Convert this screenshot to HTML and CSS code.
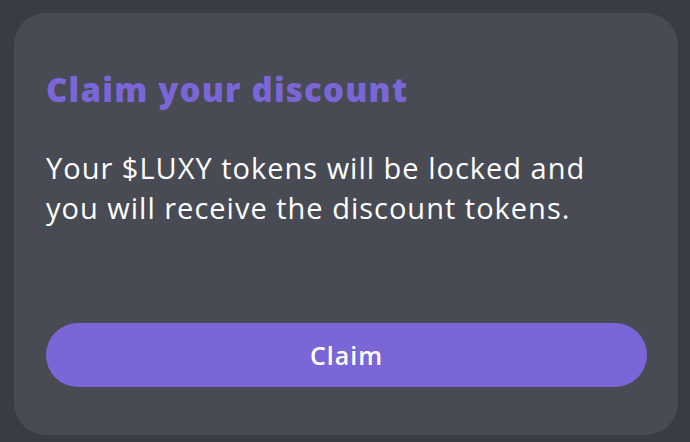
FILE: index.html
```html
<!DOCTYPE html>
<html>
<head>
<meta charset="utf-8">
<link rel="stylesheet" href="styles.css">
</head>
<body>
<div class="card">
  <h1 class="title">Claim your discount</h1>
  <p class="text">Your $LUXY tokens will be locked and you will receive the discount tokens.</p>
  <button class="btn">Claim</button>
</div>
</body>
</html>
```
FILE: styles.css
```css
html, body {
  margin: 0;
  padding: 0;
}
body {
  background: #393c44;
  width: 690px;
  height: 442px;
  padding: 13px 12px 7px 14px;
  box-sizing: border-box;
  font-family: "Open Sans", "Noto Sans", sans-serif;
}
.card {
  background: #484b53;
  border-radius: 32px;
  height: 422px;
  box-sizing: border-box;
  padding: 57px 31px 0 32px;
  display: flex;
  flex-direction: column;
}
.title {
  margin: 0;
  color: #7b66d8;
  font-size: 33px;
  font-weight: 800;
  line-height: 40px;
  letter-spacing: 1.2px;
}
.text {
  margin: 38px 0 0;
  color: #ffffff;
  font-size: 29px;
  line-height: 40px;
  letter-spacing: 1px;
  width: 570px;
}
.btn {
  margin-top: 95px;
  height: 64px;
  flex: none;
  border: none;
  border-radius: 32px;
  background: #7b66d8;
  color: #ffffff;
  font-family: inherit;
  font-size: 25px;
  font-weight: 600;
  letter-spacing: 1px;
  padding: 0;
}
```
